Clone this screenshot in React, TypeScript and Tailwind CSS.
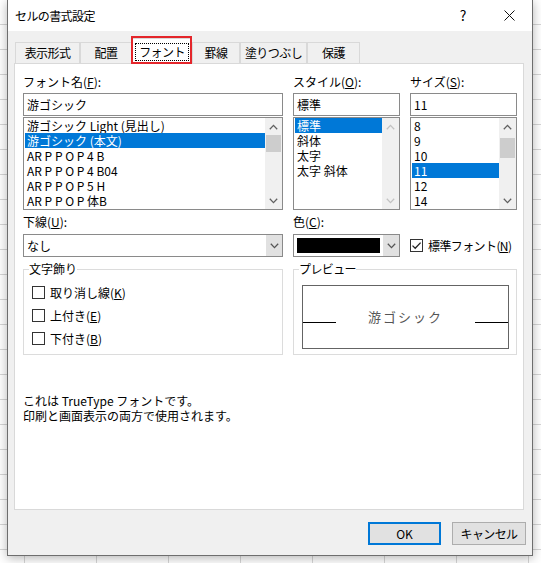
import type { ReactNode } from "react";

const font = "font-['Noto_Sans_CJK_JP','Noto_Sans',sans-serif]";

function Chevron({ dir, color }: { dir: "up" | "down"; color: string }) {
  return (
    <svg width="9" height="6" viewBox="0 0 9 6" fill="none">
      <path
        d={dir === "up" ? "M0.8 5.2 L4.5 1.4 L8.2 5.2" : "M0.8 0.8 L4.5 4.6 L8.2 0.8"}
        stroke={color}
        strokeWidth="1.3"
      />
    </svg>
  );
}

function Scrollbar({
  thumbTop,
  thumbHeight,
  disabled,
}: {
  thumbTop?: number;
  thumbHeight?: number;
  disabled?: boolean;
}) {
  const arrow = disabled ? "#c2c2c2" : "#606060";
  return (
    <div className="flex w-[17px] shrink-0 flex-col bg-[#f0f0f0]">
      <div className="flex h-[17px] items-center justify-center">
        <Chevron dir="up" color={arrow} />
      </div>
      <div className="flex-1">
        {thumbHeight ? (
          <div
            className="mx-px bg-[#cdcdcd]"
            style={{ marginTop: thumbTop, height: thumbHeight }}
          />
        ) : null}
      </div>
      <div className="flex h-[17px] items-center justify-center">
        <Chevron dir="down" color={arrow} />
      </div>
    </div>
  );
}

function ListBox({
  items,
  selected,
  thumbTop,
  thumbHeight,
  disabled,
}: {
  items: string[];
  selected: number;
  thumbTop?: number;
  thumbHeight?: number;
  disabled?: boolean;
}) {
  return (
    <div className="mt-[1px] flex h-[93px] border border-[#8a8a8a] bg-white">
      <div className="flex-1 overflow-hidden pl-px">
        {items.map((item, i) => (
          <div
            key={item}
            className={
              "h-[15px] truncate pl-[2px] text-[12px] leading-[15px] " +
              (i === selected ? "bg-[#0078d7] text-white" : "text-black")
            }
          >
            {item}
          </div>
        ))}
      </div>
      <Scrollbar thumbTop={thumbTop} thumbHeight={thumbHeight} disabled={disabled} />
    </div>
  );
}

function TextBox({ value }: { value: string }) {
  return (
    <div className="flex h-[23px] items-center border border-[#8a8a8a] bg-white pl-[3px] text-[12px]">
      {value}
    </div>
  );
}

function Label({ children }: { children: ReactNode }) {
  return <div className="h-[16px] text-[12px] leading-[16px] text-black">{children}</div>;
}

function CheckBox({ checked, children }: { checked?: boolean; children: ReactNode }) {
  return (
    <div className="flex h-[23px] items-center gap-[5px] text-[12px]">
      <span className="flex size-[13px] items-center justify-center border border-[#333] bg-white">
        {checked ? (
          <svg width="11" height="11" viewBox="0 0 11 11" fill="none">
            <path d="M1.5 5.6 L4.2 8.3 L9.6 2.6" stroke="#222" strokeWidth="1.3" />
          </svg>
        ) : null}
      </span>
      <span>{children}</span>
    </div>
  );
}

function DropButton() {
  return (
    <div className="flex w-[16px] shrink-0 items-center justify-center bg-[#e1e1e1]">
      <Chevron dir="down" color="#555" />
    </div>
  );
}

const tabs = ["表示形式", "配置", "フォント", "罫線", "塗りつぶし", "保護"];
const tabWidths = ["w-[65px]", "w-[52px]", "w-[60px]", "w-[48px]", "w-[67px]", "w-[53px]"];

export default function App() {
  return (
    <div
      className={
        "h-[563px] w-[541px] overflow-hidden bg-white text-black " +
        font +
        " [background-image:linear-gradient(to_right,#d6d6d6_1px,transparent_1px),linear-gradient(to_bottom,#d6d6d6_1px,transparent_1px)] [background-size:72px_25px] [background-position:24px_24px]"
      }
    >
      <div className="ml-[7px] flex h-[556px] w-[526px] flex-col border-x border-b border-[#6e6e6e] bg-[#f0f0f0] shadow-[0_2px_10px_rgba(0,0,0,0.3)]">
        {/* title bar */}
        <div className="flex h-[31px] items-center justify-between bg-white">
          <div className="pl-[7px] text-[12px] tracking-[-0.6px]">セルの書式設定</div>
          <div className="flex h-full">
            <div className="flex w-[46px] items-center justify-center text-[14px]">?</div>
            <div className="flex w-[46px] items-center justify-center">
              <svg width="11" height="11" viewBox="0 0 11 11">
                <path d="M0.5 0.5 L10.5 10.5 M10.5 0.5 L0.5 10.5" stroke="#111" strokeWidth="1" />
              </svg>
            </div>
          </div>
        </div>

        {/* tabs */}
        <div className="relative z-10 -mb-px flex h-[33px] items-end pl-[7px]">
          {tabs.map((tab, i) =>
            i === 2 ? (
              <div
                key={tab}
                className={"relative flex h-[26px] items-center justify-center border-x border-t border-[#d9d9d9] bg-white " + tabWidths[i]}
              >
                <span className="flex h-[18px] items-center border border-dotted border-black px-[3px] text-[12px] tracking-[-0.6px]">
                  {tab}
                </span>
                <span className="absolute -top-[3px] -right-[1px] bottom-0 -left-[2px] border-2 border-[#e4262b]" />
              </div>
            ) : (
              <div
                key={tab}
                className={"flex h-[22px] items-center justify-center border border-[#d9d9d9] bg-[#f0f0f0] text-[12px] tracking-[-0.6px] " + tabWidths[i]}
              >
                {tab}
              </div>
            ),
          )}
        </div>

        {/* panel */}
        <div className="ml-[6px] h-[447px] w-[510px] border border-[#d9d9d9] bg-white pt-[10px] pl-[8px]">
          <div className="grid grid-cols-[260px_107px_107px] gap-x-[10px]">
            <div>
              <Label>
                フォント名(<u>F</u>):
              </Label>
              <div className="mt-[3px]">
                <TextBox value="游ゴシック" />
              </div>
              <ListBox
                items={[
                  "游ゴシック Light (見出し)",
                  "游ゴシック (本文)",
                  "AR P P O P 4 B",
                  "AR P P O P 4 B04",
                  "AR P P O P 5 H",
                  "AR P P O P 体B",
                ]}
                selected={1}
                thumbTop={0}
                thumbHeight={17}
              />
            </div>
            <div>
              <Label>
                スタイル(<u>O</u>):
              </Label>
              <div className="mt-[3px]">
                <TextBox value="標準" />
              </div>
              <ListBox items={["標準", "斜体", "太字", "太字 斜体"]} selected={0} disabled />
            </div>
            <div>
              <Label>
                サイズ(<u>S</u>):
              </Label>
              <div className="mt-[3px]">
                <TextBox value="11" />
              </div>
              <ListBox
                items={["8", "9", "10", "11", "12", "14"]}
                selected={3}
                thumbTop={3}
                thumbHeight={20}
              />
            </div>
          </div>

          <div className="mt-[4px] grid grid-cols-[260px_107px_107px] gap-x-[10px]">
            <div>
              <Label>
                下線(<u>U</u>):
              </Label>
              <div className="mt-[4px] flex h-[23px] border border-[#8a8a8a] bg-white">
                <div className="flex flex-1 items-center pl-[3px] text-[12px]">なし</div>
                <DropButton />
              </div>
            </div>
            <div>
              <Label>
                色(<u>C</u>):
              </Label>
              <div className="mt-[4px] flex h-[23px] border border-[#8a8a8a] bg-white">
                <div className="flex flex-1 items-center pl-[3px]">
                  <div className="h-[15px] w-[83px] bg-black" />
                </div>
                <DropButton />
              </div>
            </div>
            <div className="flex items-end">
              <CheckBox checked>
                <span className="tracking-[-0.6px]">
                  標準フォント(<u>N</u>)
                </span>
              </CheckBox>
            </div>
          </div>

          <div className="mt-[4px] grid grid-cols-[260px_224px] gap-x-[10px]">
            <fieldset className="h-[94px] border border-[#dcdcdc] pl-[5px]">
              <legend className="text-[12px] leading-[16px]">文字飾り</legend>
              <div className="mt-[4px] pl-[3px]">
                <CheckBox>
                  取り消し線(<u>K</u>)
                </CheckBox>
                <CheckBox>
                  上付き(<u>E</u>)
                </CheckBox>
                <CheckBox>
                  下付き(<u>B</u>)
                </CheckBox>
              </div>
            </fieldset>
            <fieldset className="h-[94px] border border-[#dcdcdc] pr-[7px] pl-[5px]">
              <legend className="text-[12px] leading-[16px] tracking-[-0.6px]">プレビュー</legend>
              <div className="mt-[8px] ml-[3px] flex h-[64px] items-center border border-[#646464]">
                <div className="mt-[10px] h-px w-[33px] bg-black" />
                <div className="flex-1 text-center text-[13px] tracking-[2px] text-[#555]">游ゴシック</div>
                <div className="mt-[10px] h-px w-[33px] bg-black" />
              </div>
            </fieldset>
          </div>

          <div className="mt-[38px] text-[12px] leading-[15px]">
            <div>これは TrueType フォントです。</div>
            <div>印刷と画面表示の両方で使用されます。</div>
          </div>
        </div>

        {/* buttons */}
        <div className="mt-[12px] flex justify-end gap-[11px] pr-[6px]">
          <button className="flex h-[23px] w-[73px] items-center justify-center border-2 border-[#0078d7] bg-[#e1e1e1] text-[12px]">
            OK
          </button>
          <button className="flex h-[23px] w-[74px] items-center justify-center border border-[#adadad] bg-[#e1e1e1] text-[12px] tracking-[-0.6px]">
            キャンセル
          </button>
        </div>
      </div>
    </div>
  );
}
